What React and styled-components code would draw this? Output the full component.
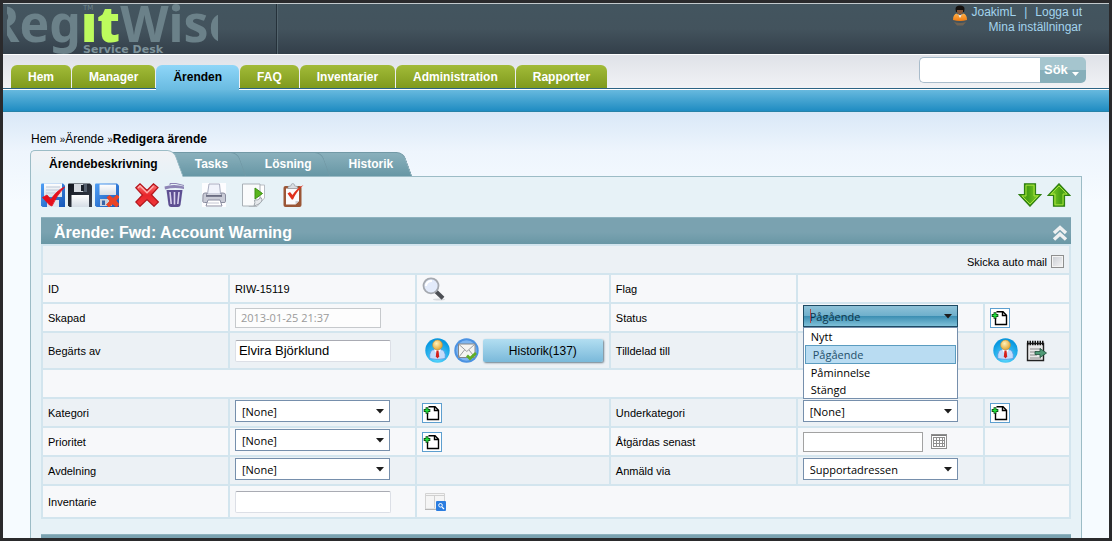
import React from "react";
//STYLED
import styled, { createGlobalStyle, css } from "styled-components";

//DATA
const mainTabs = [
  "Hem",
  "Manager",
  "Ärenden",
  "FAQ",
  "Inventarier",
  "Administration",
  "Rapporter",
];
const caseTabs = ["Ärendebeskrivning", "Tasks", "Lösning", "Historik"];
const statusOptions = ["Nytt", "Pågående", "Påminnelse", "Stängd"];

//ICONS
const Gradients = () => (
  <HiddenSvg aria-hidden="true">
    <defs>
      <linearGradient id="blue" x1="0" y1="0" x2="1" y2="1">
        <stop offset="0" stopColor="#4f9ff5" />
        <stop offset="1" stopColor="#1556b8" />
      </linearGradient>
      <linearGradient id="black" x1="0" y1="0" x2="1" y2="1">
        <stop offset="0" stopColor="#12161e" />
        <stop offset="1" stopColor="#3c4350" />
      </linearGradient>
      <linearGradient id="paper" x1="0" y1="0" x2="0" y2="1">
        <stop offset="0" stopColor="#ffffff" />
        <stop offset="1" stopColor="#d5dde6" />
      </linearGradient>
      <linearGradient id="red" x1="0" y1="0" x2="0" y2="1">
        <stop offset="0" stopColor="#f77" />
        <stop offset="0.5" stopColor="#e8252a" />
        <stop offset="1" stopColor="#f0393c" />
      </linearGradient>
      <linearGradient id="green" x1="0" y1="0" x2="1" y2="0">
        <stop offset="0" stopColor="#5fb51c" />
        <stop offset="0.4" stopColor="#46a012" />
        <stop offset="1" stopColor="#8edb2a" />
      </linearGradient>
      <radialGradient id="sky" cx="0.5" cy="0.8" r="0.7">
        <stop offset="0" stopColor="#5fdcff" />
        <stop offset="1" stopColor="#0797e0" />
      </radialGradient>
      <radialGradient id="head" cx="0.4" cy="0.35" r="0.7">
        <stop offset="0" stopColor="#fff2b8" />
        <stop offset="1" stopColor="#e0a02c" />
      </radialGradient>
      <linearGradient id="orange" x1="0" y1="0" x2="0" y2="1">
        <stop offset="0" stopColor="#ffb14a" />
        <stop offset="1" stopColor="#f07a10" />
      </linearGradient>
    </defs>
  </HiddenSvg>
);

const Floppy = ({ fill, children }) => (
  <svg width="24" height="24" viewBox="0 0 24 24">
    <path d="M0 1.5Q0 0.5 1 0.5H22L24 2.5V24H1.5L0 22.5Z" fill={fill} />
    {children}
  </svg>
);

const SaveCheckIcon = () => (
  <Floppy fill="url(#blue)">
    <path d="M3 0.5H21V14H3Z" fill="url(#paper)" />
    <path d="M5 4H19M5 7H19M5 10H19" stroke="#bcc8d8" />
    <path d="M6 17H18V24H6Z" fill="#dfe5ee" />
    <path
      d="M1.5 14.5L6 12L10 16.5Q15 8 23.5 4Q15.500 12.500 11 23L8.500 22Z"
      fill="#e60f1c"
      stroke="#e60f1c"
      strokeWidth="0.800"
    />
  </Floppy>
);

const SaveIcon = () => (
  <Floppy fill="url(#black)">
    <path d="M6 1H19V9H6Z" fill="#55606e" />
    <path d="M6 1H15V9H6Z" fill="#d7dce2" />
    <path d="M13 2H16V8H13Z" fill="#1b212b" />
    <path d="M3.500 12H21V24H3.500Z" fill="url(#paper)" />
  </Floppy>
);

const SaveCloseIcon = () => (
  <Floppy fill="url(#blue)">
    <path d="M4.500 1.500H21V12H4.500Z" fill="url(#paper)" />
    <path d="M5 16H17V23H5Z" fill="#c9d2de" />
    <path d="M7 17.500H10V22H7Z" fill="#3b66a8" />
    <path
      d="M12 14.500L14.500 12.500L18 15.500L22 12L24 14L20.800 17.800L24 21.500L21.500 24L17.800 20.800L14 24L11.500 21.800L15 18Z"
      fill="#ea4326"
      stroke="#ea4326"
      strokeWidth="1"
    />
  </Floppy>
);

const DeleteIcon = () => (
  <svg width="24" height="24" viewBox="0 0 24 24">
    <path
      d="M0.800 4.800L5 0.800L12 7.500L18.500 0.800L23 4.500L16.500 11.800L23.300 19L19 23.300L12 16.500L5 23.300L0.800 19L7.500 12Z"
      fill="url(#red)"
      stroke="#b3141b"
      strokeWidth="1.200"
    />
    <path
      d="M3 5L5 3L12 9.800L18.500 3.200"
      fill="none"
      stroke="#ffb0ae"
      strokeWidth="1.300"
    />
  </svg>
);

const TrashIcon = () => (
  <svg width="24" height="24" viewBox="0 0 24 24">
    <path d="M4.500 7H20.500L18.500 22Q18 24 16 24H9Q7 24 6.500 22Z" fill="#5d4f92" />
    <path
      d="M8 9L9.200 21M12.500 9V21.500M17 9L15.800 21"
      stroke="#d9d3ee"
      strokeWidth="1.600"
      fill="none"
    />
    <path d="M2.500 3.500Q12 0.500 22 3.500V6Q12 4 3 6.500Z" fill="#8d84b5" />
    <path d="M8 2V0.500H14L22 2.500" stroke="#8d84b5" fill="none" />
  </svg>
);

const PrinterIcon = () => (
  <svg width="24" height="24" viewBox="0 0 24 24">
    <path d="M0 0H24V24H0Z" fill="#fdfdff" />
    <path d="M7 1H17.500L18.500 11H5.500Z" fill="#f1f3fb" stroke="#a9adc0" />
    <path
      d="M1 12Q1 10 3 10H5L4.500 12.500H19.500L19 10H21Q23.500 10 23.500 12V18.500Q23.500 19.500 22 19.500H2.500Q0.800 19.500 0.800 18.500Z"
      fill="#c9cbd6"
      stroke="#8a8d9f"
    />
    <path d="M4 13H20" stroke="#5f6277" strokeWidth="1.500" />
    <path d="M6 17H18L20 23H4Z" fill="#fff" stroke="#8c8fa3" />
    <path d="M6 20H17" stroke="#c4c6d3" />
  </svg>
);

const RunPageIcon = () => (
  <svg width="24" height="24" viewBox="0 0 24 24">
    <path d="M7 2H22.500V15L15 23.500H7Z" fill="#fff" stroke="#b9bec4" />
    <path d="M0.500 1H18V17L12 23H0.500Z" fill="#fafbfc" stroke="#a9b0b6" />
    <path d="M12 23Q13.500 19 12.500 17Q16 18 19 14.500Q22 18 16 21.500Z" fill="#e6e9ec" stroke="#9fa6ac" />
    <path d="M13 5L20.500 10.500L13 16Z" fill="#58b51c" stroke="#3c8f13" />
  </svg>
);

const ClipboardIcon = () => (
  <svg width="24" height="24" viewBox="0 0 24 24">
    <rect x="1.500" y="3" width="18" height="21" rx="2" fill="#9b5636" />
    <path d="M4 5.500H17V18L13.500 21.500H4Z" fill="#fbfbfd" />
    <path d="M17 18H13.500V21.500Z" fill="#cfd2d8" />
    <path d="M6 5.500V3.500L9 2.800Q9 0.500 10.800 0.500T12.500 2.800L15.500 3.500V5.500Z" fill="#d9dde2" stroke="#8d949c" strokeWidth="0.600" />
    <path d="M5.500 10.500L8 9L10.500 12Q15 5 21.500 2Q14.500 8.500 11 16.500H9.800Z" fill="#e0301c" />
  </svg>
);

const ArrowIcon = ({ up }) => (
  <svg width="24" height="24" viewBox="0 0 24 24">
    <g transform={up ? "rotate(180 12 12)" : undefined}>
      <path
        d="M6.500 0.800H17.500V11.500H23L12 23.200L1 11.500H6.500Z"
        fill="url(#green)"
        stroke="#2f7f12"
        strokeWidth="1.200"
      />
      <path
        d="M8 2.200H16V13H20L12 21L4 13H8Z"
        fill="none"
        stroke="#a5e03c"
        strokeWidth="1"
      />
    </g>
  </svg>
);

const CollapseIcon = () => (
  <svg width="16" height="16" viewBox="0 0 16 16">
    <path
      d="M2 8L8 2.500L14 8M2 14.500L8 9L14 14.500"
      fill="none"
      stroke="#eef0f1"
      strokeWidth="3.400"
    />
  </svg>
);

const UserIcon = () => (
  <svg width="16" height="22" viewBox="0 0 16 22">
    <path d="M3.500 4Q3.500 0.500 8 0.500T12.500 4L12 7H4Z" fill="#15110f" />
    <path d="M5 5H11V7Q10 9.500 8 9.500T5 7Z" fill="#8a5836" />
    <path d="M1 15Q1 9 5 8.500L8 11.500L11 8.500Q15 9 15 15Q8 17 1 15Z" fill="url(#orange)" />
    <path d="M6 9L8 13L10 9L8 10.500Z" fill="#fff" />
    <path d="M2 17Q8 19 14 17L11 20.500H5Z" fill="#d98a3e" opacity="0.3" />
  </svg>
);

const SearchIcon = () => (
  <svg width="24" height="24" viewBox="0 0 24 24">
    <ellipse cx="17" cy="22.500" rx="6" ry="1" fill="#d7dade" />
    <path d="M14 14.500L21 21.300" stroke="#4c4f54" strokeWidth="4" />
    <circle cx="9" cy="8.800" r="7.500" fill="#e3ebfb" stroke="#a5a9b0" strokeWidth="1.800" />
    <path d="M4 9Q4.500 4 10 4" stroke="#fff" strokeWidth="2" fill="none" />
  </svg>
);

const PersonIcon = () => (
  <svg width="25" height="25" viewBox="0 0 25 25">
    <circle cx="12.500" cy="12.500" r="12.200" fill="url(#sky)" />
    <path d="M4.800 20.500Q3.800 11.500 10 11.500H15Q21.200 11.500 20.200 20.500Q12.500 22.500 4.800 20.500Z" fill="#c4dcfa" stroke="#4a8fe0" strokeWidth="0.700" />
    <path d="M9 11.500L12.500 17L16 11.500Z" fill="#fff" />
    <path d="M11.500 12.500H13.500L14.200 18.500L12.500 20.500L10.800 18.500Z" fill="#d4201c" />
    <circle cx="12.500" cy="7" r="4.900" fill="url(#head)" stroke="#c98a28" strokeWidth="0.500" />
  </svg>
);

const MailIcon = () => (
  <svg width="25" height="25" viewBox="0 0 25 25">
    <circle cx="12.500" cy="12.500" r="12.200" fill="#4b92e2" />
    <circle cx="12.500" cy="12.500" r="10.200" fill="#7fb6f0" />
    <path d="M4.500 6H21V19.500H4.500Z" fill="#f5f5f2" stroke="#85878a" />
    <path d="M4.500 6L12.800 13.500L21 6M4.500 19.500L10.500 12M21 19.500L15 12" fill="none" stroke="#9a9c9e" />
    <path d="M13 17.500L16 20.500L22 15" fill="none" stroke="#5fae26" strokeWidth="2.800" />
  </svg>
);

const AddPageIcon = () => (
  <svg width="18" height="18" viewBox="0 0 18 18">
    <path d="M5 3L6 2.500H12L15.500 6V15.500H4.500V9" fill="#fff" />
    <path
      d="M5.500 2.700H12L15.500 6.200V15.500H4.500V9M11.500 3V6.500H15.500"
      fill="none"
      stroke="#000"
      strokeWidth="1.400"
    />
    <path d="M4 3.200V9.800M0.700 6.500H7.300" stroke="#0b3d12" strokeWidth="2.800" />
    <path d="M4 4V9M1.500 6.500H6.500" stroke="#22e63c" strokeWidth="1.400" />
  </svg>
);

const NotesIcon = () => (
  <svg width="21" height="22" viewBox="0 0 21 22">
    <path d="M1.500 3.500H17.500V20.500H1.500Z" fill="#e8e8e8" stroke="#222" strokeWidth="1.400" />
    <path d="M1 3H18" stroke="#111" strokeWidth="4.500" strokeDasharray="1.500 1" />
    <path d="M4 9H15M4 12H11M4 15H11M4 18H15" stroke="#8a8a8a" />
    <path d="M9 11.500H14V8.500L20.500 13L14 17.500V14.500H9Z" fill="#4f9a76" stroke="#1f4f3b" strokeWidth="0.800" />
  </svg>
);

const BrowseIcon = () => (
  <svg width="21" height="18" viewBox="0 0 21 18">
    <path d="M0.500 0.500H19.500V16H0.500Z" fill="#f5f5f5" stroke="#d3d3d3" />
    <path d="M1 2.500H19M9.500 3V15" stroke="#d0d0d0" />
    <path d="M0 16.500H11" stroke="#b5b5b5" />
    <rect x="11" y="8" width="10" height="10" rx="1" fill="#2b7de0" />
    <circle cx="15.500" cy="12.300" r="1.800" fill="none" stroke="#fff" />
    <path d="M17 14L19 16" stroke="#fff" strokeWidth="1.200" />
  </svg>
);

const CalendarIcon = () => (
  <svg width="16" height="15" viewBox="0 0 16 15" shapeRendering="crispEdges">
    <path d="M0.500 0.500H15.500V14.500H0.500Z" fill="#fff" stroke="#8f8f8f" />
    <path d="M1 1.500H15" stroke="#7d7d7d" />
    <path d="M2 3H14V13H2Z" fill="#8f8f8f" />
    <path d="M3 4H5V6H3ZM6 4H8V6H6ZM9 4H11V6H9ZM12 4H13V6H12ZM3 7H5V9H3ZM6 7H8V9H6ZM9 7H11V9H9ZM12 7H13V9H12ZM3 10H5V12H3ZM6 10H8V12H6ZM9 10H11V12H9ZM12 10H13V12H12Z" fill="#fff" />
  </svg>
);

//SMALL PARTS
const Dropdown = ({ id, options, value, open }) => (
  <SelectBox>
    <Select id={id} defaultValue={value} $open={open}>
      {options.map((option) => (
        <option key={option}>{option}</option>
      ))}
    </Select>
    <svg width="8" height="5" viewBox="0 0 8 5">
      <path d="M0 0H8L4 4.500Z" fill="#1d1d1d" />
    </svg>
    {open && <Caret />}
    {open && (
      <Options role="listbox" aria-label="Status">
        {options.map((option) => (
          <Option
            key={option}
            role="option"
            aria-selected={option === value}
            $selected={option === value}
          >
            {option}
          </Option>
        ))}
      </Options>
    )}
  </SelectBox>
);

const AddButton = ({ label }) => (
  <PageButton type="button" aria-label={label}>
    <AddPageIcon />
  </PageButton>
);

const App = () => {
  return (
    <>
      <GlobalStyle />
      <Gradients />
      <Page>
        <Header>
          <Logo href="#" aria-label="RegitWise Service Desk">
            <Brand>
              Reg<b>ıt</b>Wise
            </Brand>
            <Trademark>TM</Trademark>
            <Tagline>Service Desk</Tagline>
          </Logo>
          <Account>
            <div>
              <UserIcon />
              <a href="#">JoakimL</a>
              <span>|</span>
              <a href="#">Logga ut</a>
            </div>
            <div>
              <a href="#">Mina inställningar</a>
            </div>
          </Account>
        </Header>

        <Navigation>
          <MainTabs>
            {mainTabs.map((tab) => (
              <MainTab href="#" key={tab} $active={tab === "Ärenden"}>
                {tab}
              </MainTab>
            ))}
          </MainTabs>
          <SearchForm role="search">
            <input type="text" aria-label="Sök" />
            <button type="button">
              Sök
              <svg width="7" height="4" viewBox="0 0 7 4">
                <path d="M0 0H7L3.500 4Z" fill="#fff" />
              </svg>
            </button>
          </SearchForm>
        </Navigation>
        <BlueBar />

        <Content>
          <Breadcrumb aria-label="Sökväg">
            <a href="#">Hem</a> <small>»</small>
            <a href="#">Ärende</a> <small>»</small>
            <strong>Redigera ärende</strong>
          </Breadcrumb>
          <CaseTabs>
            {caseTabs.map((tab, index) => (
              <CaseTab
                type="button"
                key={tab}
                $active={index === 0}
                $order={caseTabs.length - index}
              >
                {tab}
              </CaseTab>
            ))}
          </CaseTabs>

          <Panel>
            <Toolbar>
              <ToolGroup>
                <IconButton type="button" aria-label="Spara och stäng"><SaveCheckIcon /></IconButton>
                <IconButton type="button" aria-label="Spara"><SaveIcon /></IconButton>
                <IconButton type="button" aria-label="Avbryt"><SaveCloseIcon /></IconButton>
              </ToolGroup>
              <ToolGroup>
                <IconButton type="button" aria-label="Stäng"><DeleteIcon /></IconButton>
                <IconButton type="button" aria-label="Ta bort"><TrashIcon /></IconButton>
              </ToolGroup>
              <IconButton type="button" aria-label="Skriv ut"><PrinterIcon /></IconButton>
              <IconButton type="button" aria-label="Kör"><RunPageIcon /></IconButton>
              <IconButton type="button" aria-label="Checklista"><ClipboardIcon /></IconButton>
              <ToolGroup $end>
                <IconButton type="button" aria-label="Nästa"><ArrowIcon /></IconButton>
                <IconButton type="button" aria-label="Föregående"><ArrowIcon up /></IconButton>
              </ToolGroup>
            </Toolbar>

            <SectionBar>
              <h1>Ärende: Fwd: Account Warning</h1>
              <IconButton type="button" aria-label="Fäll ihop"><CollapseIcon /></IconButton>
            </SectionBar>

            <Form>
              <colgroup>
                <Col $width="18.2%" />
                <Col $width="18.2%" />
                <Col $width="18.9%" />
                <Col $width="18.2%" />
                <Col $width="18.2%" />
                <Col />
              </colgroup>
              <tbody>
                <Row $shaded>
                  <td colSpan={6}>
                    <AutoMail>
                      <label htmlFor="automail">Skicka auto mail</label>
                      <input type="checkbox" id="automail" />
                    </AutoMail>
                  </td>
                </Row>
                <Row>
                  <td>ID</td>
                  <td>RIW-15119</td>
                  <td>
                    <Actions>
                      <IconButton type="button" aria-label="Sök ID"><SearchIcon /></IconButton>
                    </Actions>
                  </td>
                  <td>Flag</td>
                  <td colSpan={2} />
                </Row>
                <Row>
                  <td><label htmlFor="created">Skapad</label></td>
                  <td>
                    <DateInput id="created" type="text" disabled defaultValue="2013-01-25 21:37" />
                  </td>
                  <td />
                  <td><label htmlFor="status">Status</label></td>
                  <SelectCell>
                    <Dropdown id="status" open value="Pågående" options={statusOptions} />
                  </SelectCell>
                  <td><AddButton label="Ny status" /></td>
                </Row>
                <Row $shaded $height={35}>
                  <td><label htmlFor="requester">Begärts av</label></td>
                  <td>
                    <TextInput id="requester" type="text" defaultValue="Elvira Björklund" />
                  </td>
                  <td>
                    <Actions $indent>
                      <IconButton type="button" aria-label="Visa användare"><PersonIcon /></IconButton>
                      <IconButton type="button" aria-label="Skicka mail"><MailIcon /></IconButton>
                      <HistoryButton type="button">Historik(137)</HistoryButton>
                    </Actions>
                  </td>
                  <td><label htmlFor="assignee">Tilldelad till</label></td>
                  <td><TextInput id="assignee" type="text" /></td>
                  <td>
                    <Actions $indent $wide>
                      <IconButton type="button" aria-label="Visa handläggare"><PersonIcon /></IconButton>
                      <IconButton type="button" aria-label="Anteckningar"><NotesIcon /></IconButton>
                    </Actions>
                  </td>
                </Row>
                <Row>
                  <td colSpan={6} />
                </Row>
                <Row $shaded>
                  <td><label htmlFor="category">Kategori</label></td>
                  <SelectCell><Dropdown id="category" options={["[None]"]} /></SelectCell>
                  <td><AddButton label="Ny kategori" /></td>
                  <td><label htmlFor="subcategory">Underkategori</label></td>
                  <SelectCell><Dropdown id="subcategory" options={["[None]"]} /></SelectCell>
                  <td><AddButton label="Ny underkategori" /></td>
                </Row>
                <Row>
                  <td><label htmlFor="priority">Prioritet</label></td>
                  <SelectCell><Dropdown id="priority" options={["[None]"]} /></SelectCell>
                  <td><AddButton label="Ny prioritet" /></td>
                  <td><label htmlFor="due">Åtgärdas senast</label></td>
                  <td>
                    <Actions $wide>
                      <DueInput id="due" type="text" />
                      <IconButton type="button" aria-label="Välj datum"><CalendarIcon /></IconButton>
                    </Actions>
                  </td>
                  <td />
                </Row>
                <Row $shaded>
                  <td><label htmlFor="department">Avdelning</label></td>
                  <SelectCell><Dropdown id="department" options={["[None]"]} /></SelectCell>
                  <td />
                  <td><label htmlFor="source">Anmäld via</label></td>
                  <SelectCell><Dropdown id="source" options={["Supportadressen"]} /></SelectCell>
                  <td />
                </Row>
                <Row $height={31}>
                  <td><label htmlFor="inventory">Inventarie</label></td>
                  <td><TextInput id="inventory" type="text" /></td>
                  <td colSpan={4}>
                    <Actions $indent>
                      <IconButton type="button" aria-label="Bläddra"><BrowseIcon /></IconButton>
                    </Actions>
                  </td>
                </Row>
              </tbody>
            </Form>

            <SectionBar />
          </Panel>
        </Content>
      </Page>
    </>
  );
};

//STYLED
const GlobalStyle = createGlobalStyle`
  * {
    box-sizing: border-box;
    margin: 0;
    padding: 0;
  }
  body {
    font-family: "Liberation Sans", Arial, sans-serif;
    font-size: 12px;
    color: #000;
    background: #2a2a2c;
  }
  a {
    color: inherit;
    text-decoration: none;
  }
  button, input, select {
    font-family: inherit;
  }
  svg {
    display: block;
    flex-shrink: 0;
  }
`;

const HiddenSvg = styled.svg`
  position: absolute;
  width: 0;
  height: 0;
`;

const Page = styled.div`
  height: 100vh;
  overflow: hidden;
  border: 3px solid #2a2a2c;
  background: #f6fbff;
`;

const Header = styled.header`
  display: flex;
  justify-content: space-between;
  height: 51px;
  border-top: 1px solid #c3cacd;
  background: linear-gradient(#43555f, #43535d 50%, #333f4a);
`;

const Logo = styled.a`
  position: relative;
  width: 274px;
  padding-left: 4px;
  border-right: 1px solid #25313a;
  box-shadow: 1px 0 #54656e;
  font-family: "DejaVu Sans", Verdana, sans-serif;
  font-weight: bold;
  color: #6b8189;
`;

const Brand = styled.span`
  display: flex;
  justify-content: center;
  width: 211px;
  height: 50px;
  overflow: hidden;
  font-family: "Noto Sans", Verdana, sans-serif;
  font-size: 50px;
  line-height: 38px;
  b {
    color: #bdfb5d;
  }
`;

const Trademark = styled.span`
  position: absolute;
  left: 80px;
  top: 1px;
  font-size: 7px;
  font-weight: normal;
  line-height: 7px;
`;

const Tagline = styled.span`
  position: absolute;
  left: 80px;
  top: 40px;
  font-size: 11px;
  line-height: 12px;
  color: #7d929a;
`;

const Account = styled.div`
  padding: 1px 27px 0 0;
  line-height: 15px;
  color: #a3d4ee;
  div {
    display: flex;
    justify-content: flex-end;
    height: 15px;
  }
  svg {
    margin-right: 3px;
  }
  span {
    margin: 0 8px;
  }
`;

const Navigation = styled.nav`
  display: flex;
  justify-content: space-between;
  height: 35px;
  padding: 0 23px 0 8px;
  border-top: 1px solid #fff;
  border-bottom: 1px solid #2c6484;
  background: linear-gradient(#dfe2e8, #f1f2f5);
`;

const MainTabs = styled.div`
  display: flex;
  align-items: flex-end;
  gap: 1px;
`;

const MainTab = styled.a`
  height: 23px;
  padding: 0 17px;
  border-radius: 6px 6px 0 0;
  font-weight: bold;
  line-height: 24px;
  color: #fff;
  background: linear-gradient(#a2bb38, #7f9a1d);
  ${({ $active }) =>
    $active &&
    css`
      height: 25px;
      margin-bottom: -2px;
      color: #000;
      background: linear-gradient(#8fd6f8, #69bbe1);
    `}
`;

const SearchForm = styled.form`
  display: flex;
  align-items: flex-start;
  padding-top: 2px;
  input {
    width: 121px;
    height: 26px;
    border: 1px solid #a9bccb;
    border-right: none;
    border-radius: 5px 0 0 5px;
    background: #fff;
  }
  button {
    display: flex;
    align-items: center;
    gap: 4px;
    width: 46px;
    height: 26px;
    padding: 0 4px 2px;
    border: none;
    border-radius: 0 5px 5px 0;
    font-size: 13px;
    font-weight: bold;
    color: #fff;
    background: linear-gradient(#a5c5ce 48%, #87afba 52%);
  }
  svg {
    margin-top: 10px;
  }
`;

const BlueBar = styled.div`
  height: 23px;
  border-top: 1px solid #fff;
  border-bottom: 1px solid #2783a8;
  background: linear-gradient(#67b9de, #1f8cc2);
`;

const Content = styled.main`
  padding: 19px 27px 0;
  background: linear-gradient(#d9e8f7, #eef5fd 40px, #f6fbff 90px);
`;

const Breadcrumb = styled.nav`
  height: 19px;
  padding-left: 1px;
  line-height: 16px;
  small {
    font-size: 10px;
  }
`;

const CaseTabs = styled.div`
  display: flex;
  align-items: flex-end;
  position: relative;
  z-index: 1;
`;

const CaseTab = styled.button`
  position: relative;
  z-index: ${({ $order }) => $order};
  height: 24px;
  padding: 0 18px 0 19px;
  border: none;
  font-size: 12px;
  font-weight: bold;
  color: #fff;
  background: none;
  &::before {
    content: "";
    position: absolute;
    inset: 0 4px 0 -14px;
    z-index: -1;
    border: 1px solid #7299a6;
    border-bottom: none;
    border-radius: 0 7px 0 0;
    background: linear-gradient(#8ab0bc, #6797a5);
    transform: skewX(20deg);
  }
  ${({ $active }) =>
    $active &&
    css`
      height: 27px;
      margin-bottom: -1px;
      color: #000;
      &::before {
        inset: 0 -3px 0 20px;
        border-color: #9cbcc6;
        background: linear-gradient(#f1f2f5, #e7f2f7);
      }
      &::after {
        content: "";
        position: absolute;
        inset: 0 30px 0 0;
        z-index: -1;
        border: 1px solid #9cbcc6;
        border-width: 1px 0 0 1px;
        border-radius: 5px 0 0 0;
        background: linear-gradient(#f1f2f5, #e7f2f7);
      }
    `}
`;

const Panel = styled.section`
  padding: 0 10px;
  border: 1px solid #9cbcc6;
  background: #e7f2f7;
`;

const Toolbar = styled.div`
  display: flex;
  align-items: center;
  gap: 16px;
  padding: 6px 0 10px;
`;

const ToolGroup = styled.div`
  display: flex;
  gap: ${({ $end }) => ($end ? "5px" : "3px")};
  margin-left: ${({ $end }) => ($end ? "auto" : "0")};
`;

const IconButton = styled.button`
  border: none;
  background: none;
`;

const SectionBar = styled.div`
  display: flex;
  align-items: center;
  justify-content: space-between;
  height: 27px;
  padding: 4px 3px 0 13px;
  border-top: 1px solid #8fb3bf;
  background: linear-gradient(#7aa2b0 55%, #6997a5);
  h1 {
    font-size: 16px;
    line-height: 20px;
    color: #fff;
  }
`;

const Form = styled.table`
  width: 100%;
  margin-bottom: 15px;
  table-layout: fixed;
  border-spacing: 2px;
  font-size: 11px;
  background: #d3e5ee;
`;

const Col = styled.col`
  width: ${({ $width }) => $width || "auto"};
`;

const Row = styled.tr`
  height: ${({ $height }) => $height || 27}px;
  td {
    padding: 0 5px;
    background: ${({ $shaded }) => ($shaded ? "#ecf1f5" : "#f7f8fa")};
  }
`;

const SelectCell = styled.td`
  padding-top: 1px !important;
  vertical-align: top;
`;

const AutoMail = styled.div`
  display: flex;
  align-items: center;
  justify-content: flex-end;
  gap: 4px;
  padding-top: 4px;
  input {
    appearance: none;
    width: 13px;
    height: 13px;
    border: 1px solid #8e8f8f;
    background: linear-gradient(135deg, #c8ccd2, #f5f5f6);
    box-shadow: inset 0 0 0 1px #f4f4f4;
  }
`;

const Actions = styled.div`
  display: flex;
  align-items: center;
  gap: ${({ $wide }) => ($wide ? "8px" : "4px")};
  padding-left: ${({ $indent }) => ($indent ? "3px" : "0")};
`;

const TextInput = styled.input`
  display: block;
  width: 156px;
  height: 22px;
  padding: 0 3px;
  border: 1px solid #dcdfe6;
  border-top-color: #a9abb3;
  border-radius: 2px;
  font-size: 13px;
  background: #fff;
`;

const DateInput = styled.input`
  display: block;
  width: 146px;
  height: 20px;
  padding: 0 5px;
  border: 1px solid #c6c9cc;
  font-family: "Open Sans", "Segoe UI", sans-serif !important;
  font-size: 11px;
  color: #9a9a9a;
  background: #fdfdfd;
`;

const DueInput = styled(DateInput)`
  width: 120px;
  border-color: #a2a2a2;
  background: #fff;
`;

const SelectBox = styled.div`
  position: relative;
  width: 155px;
  > svg {
    position: absolute;
    right: 6px;
    top: 9px;
    pointer-events: none;
  }
`;

const Select = styled.select`
  appearance: none;
  display: block;
  width: 100%;
  height: 22px;
  padding: 0 6px;
  border: 1px solid ${({ $open }) => ($open ? "#1d4a63" : "#768fac")};
  font-family: "Open Sans", "Segoe UI", sans-serif !important;
  font-size: 11px;
  color: ${({ $open }) => ($open ? "#0d3449" : "#000")};
  background: ${({ $open }) =>
    $open ? "linear-gradient(#8fc2d8, #6fb0cc 48%, #3d8fb3 52%, #7fc0d8)" : "#fff"};
`;

const Caret = styled.i`
  position: absolute;
  left: 7px;
  top: 4px;
  width: 1px;
  height: 14px;
  background: #b04a4a;
`;

const Options = styled.ul`
  position: absolute;
  z-index: 2;
  top: 22px;
  left: 0;
  width: 100%;
  border: 1px solid #768fac;
  list-style: none;
  background: #fff;
`;

const Option = styled.li`
  padding: 0 7px;
  font-family: "Open Sans", "Segoe UI", sans-serif;
  font-size: 11px;
  line-height: 17px;
  ${({ $selected }) =>
    $selected &&
    css`
      margin: 0 1px;
      border: 1px solid #5b9cc0;
      color: #24506b;
      background: #b9dcf2;
    `}
`;

const PageButton = styled.button`
  display: block;
  border: 1px solid #5d9fcf;
  background: #fff;
`;

const HistoryButton = styled.button`
  width: 120px;
  height: 23px;
  border: none;
  border-radius: 2px;
  font-size: 12px;
  background: linear-gradient(#b2def1, #7ab9da);
  box-shadow: 1px 1px 2px #6b7f8c;
`;

export default App;
